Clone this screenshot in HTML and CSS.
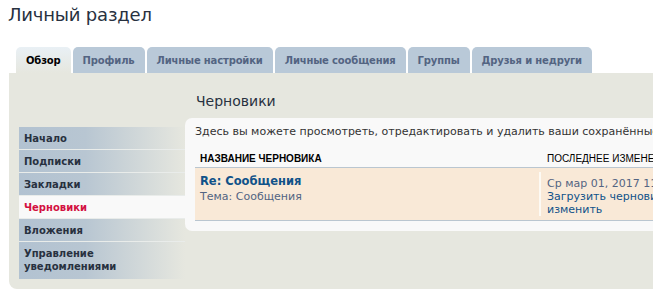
FILE: index.html
```html
<!DOCTYPE html>
<html lang="ru">
  <head>
    <meta charset="utf-8">
    <title>Личный раздел</title>
    <link rel="stylesheet" href="styles.css">
  </head>
  <body>
    <h1 class="page-title">Личный раздел</h1>

    <div class="tabs">
      <a class="tab active">Обзор</a>
      <a class="tab">Профиль</a>
      <a class="tab">Личные настройки</a>
      <a class="tab">Личные сообщения</a>
      <a class="tab">Группы</a>
      <a class="tab">Друзья и недруги</a>
    </div>

    <div class="panel">
      <ul class="menu">
        <li><a>Начало</a></li>
        <li><a>Подписки</a></li>
        <li><a>Закладки</a></li>
        <li class="active"><a>Черновики</a></li>
        <li><a>Вложения</a></li>
        <li><a>Управление уведомлениями</a></li>
      </ul>

      <div class="main">
        <h2>Черновики</h2>
        <div class="box">
          <p class="intro">Здесь вы можете просмотреть, отредактировать и удалить ваши сохранённые черновики.</p>
          <div class="list">
            <div class="list-head">
              <div class="col-name">Название черновика</div>
              <div class="col-date">Последнее изменение</div>
            </div>
            <div class="row">
              <div class="col-name">
                <a class="topic">Re: Сообщения</a>
                <div class="sub">Тема: <a>Сообщения</a></div>
              </div>
              <div class="col-date">
                <div class="date">Ср мар 01, 2017 11:52</div>
                <a>Загрузить черновик</a><br>
                <a>изменить</a>
              </div>
            </div>
          </div>
        </div>
      </div>
    </div>
  </body>
</html>
```

FILE: styles.css
```css
body {
  margin: 0;
  padding: 0 0 0 8px;
  background-color: #fff;
  color: #28313f;
  font-family: 'DejaVu Sans', Verdana, sans-serif;
  overflow: hidden;
  width: 645px;
}

a {
  cursor: pointer;
}

.page-title {
  font-weight: normal;
  font-size: 18px;
  letter-spacing: -0.2px;
  margin: 0;
  padding-top: 4px;
  height: 43px;
  color: #28313f;
}

.tabs {
  display: flex;
  gap: 2px;
  margin-left: 8px;
  width: 700px;
}

.tab {
  display: block;
  height: 26px;
  line-height: 27px;
  padding: 0 10px;
  font-size: 10px;
  letter-spacing: -0.15px;
  font-weight: bold;
  color: #536482;
  background-color: #b9c9d8;
  border-radius: 5px 5px 0 0;
  white-space: nowrap;
}

.tab.active {
  color: #000;
  background: linear-gradient(to bottom, #e9f0f5 0%, #e6e7df 100%);
}

.panel {
  display: flex;
  width: 720px;
  margin-left: 1px;
  background-color: #e6e7df;
  border-radius: 0 0 0 8px;
  padding: 0 0 10px 10px;
}

.menu {
  list-style: none;
  margin: 54px 0 0 0;
  padding: 0;
  width: 166px;
  flex-shrink: 0;
}

.menu li {
  border-bottom: 1px solid #e9ecea;
}

.menu li:last-child {
  border-bottom: none;
}

.menu a {
  display: block;
  padding: 5px 5px 4px 5px;
  line-height: 13px;
  font-size: 10px;
  font-weight: bold;
  color: #28313f;
  background: linear-gradient(to right, #b2c2d1 0%, #b8c6d2 40%, #e6e7df 100%);
}

.menu li:last-child a {
  padding: 5px 5px 6px 5px;
}

.menu li.active a {
  background: #f9f9f9;
  color: #d31141;
}

.main {
  flex: 1;
}

.main h2 {
  font-weight: normal;
  font-size: 14px;
  margin: 20px 0 0 11px;
  height: 25px;
  color: #28313f;
}

.box {
  background-color: #f9f9f9;
  border-radius: 7px 0 0 7px;
  padding: 7px 0 10px 10px;
}

.intro {
  margin: 0;
  font-size: 11px;
  line-height: 14px;
  white-space: nowrap;
  color: #333;
}

.list {
  margin-top: 11px;
}

.list-head {
  display: flex;
  height: 17px;
  border-bottom: 1px solid #bac6d0;
  font-family: 'Liberation Sans', Arial, sans-serif;
  font-size: 10px;
  text-transform: uppercase;
  color: #000;
  line-height: 17px;
}

.list-head .col-name {
  font-weight: bold;
}

.list-head .col-date {
  padding-left: 1px;
}

.col-name {
  width: 346px;
  padding-left: 5px;
  flex-shrink: 0;
}

.col-date {
  padding-left: 6px;
  white-space: nowrap;
}

.row {
  display: flex;
  background-color: #f9e9d7;
  border-bottom: 1px solid #bac6d0;
  padding: 4px 0 4px 0;
  font-size: 11px;
  line-height: 13px;
}

.row .col-name {
  border-right: 2px solid #fdfaf4;
  width: 339px;
}

.row a {
  color: #105289;
}

.topic {
  display: block;
  font-weight: bold;
  font-size: 11.5px;
  line-height: 16px;
  margin-top: 1px;
}

.sub {
  color: #536482;
  margin-top: 1px;
}

.sub a {
  color: #536482 !important;
}

.date {
  color: #536482;
  margin-top: 5px;
}
```
